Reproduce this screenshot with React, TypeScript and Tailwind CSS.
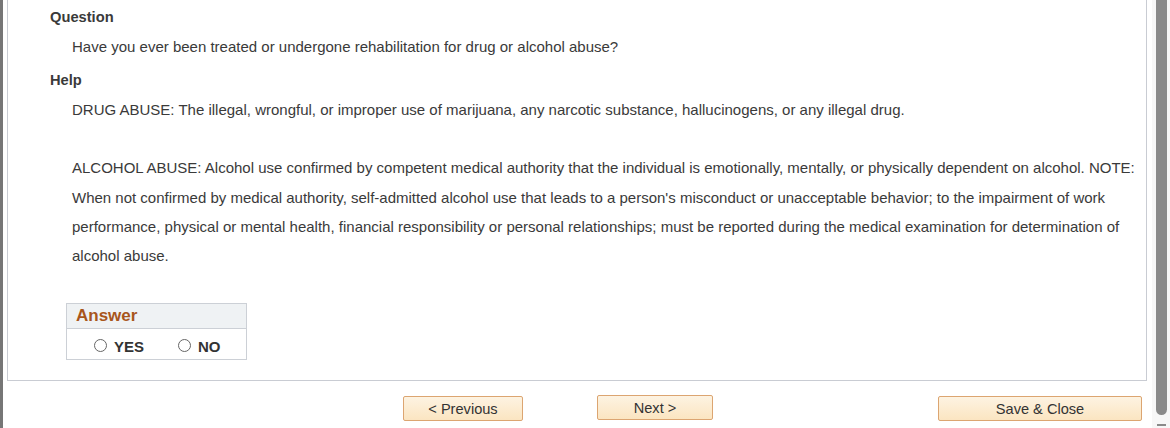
import React from "react";

function Radio({ label }: { label: string }) {
  return (
    <label className="flex items-center gap-[7px]">
      <span className="block w-[13px] h-[13px] rounded-full border border-[#666] bg-white -mt-[4px]" />
      <span className="font-bold text-[15px] text-[#333] leading-[20px]">{label}</span>
    </label>
  );
}

function Btn({ children, className }: { children: React.ReactNode; className: string }) {
  return (
    <button
      className={
        "h-[25px] rounded-[2px] border border-[#dca571] bg-gradient-to-b from-[#fdf3e2] to-[#fbe5c1] text-[14.6px] text-[#333] leading-[20px] " +
        className
      }
    >
      {children}
    </button>
  );
}

export default function App() {
  return (
    <div
      className="w-[1170px] h-[428px] flex bg-white overflow-hidden"
      style={{ fontFamily: '"Liberation Sans", Arial, sans-serif' }}
    >
      <div className="w-[3px] h-full bg-[#767676]" />
      <div className="flex-1 flex flex-col">
        <div className="ml-[4px] w-[1140px] h-[381px] border-l border-r border-b border-[#c9ccd3] pl-[42px] pt-[3px] text-[#3a3a3a]">
          <div className="font-bold text-[14.7px] leading-[29px]">Question</div>
          <div className="pl-[22px] text-[15px] leading-[29px]">
            Have you ever been treated or undergone rehabilitation for drug or alcohol abuse?
          </div>
          <div className="mt-[5px] font-bold text-[14.7px] leading-[29px]">Help</div>
          <div className="pl-[22px] pr-[6px] text-[15px] leading-[29.2px]">
            DRUG ABUSE: The illegal, wrongful, or improper use of marijuana, any narcotic substance, hallucinogens, or any illegal drug.
            <br />
            <br />
            ALCOHOL ABUSE: Alcohol use confirmed by competent medical authority that the individual is emotionally, mentally, or physically dependent on alcohol. NOTE: When not confirmed by medical authority, self-admitted alcohol use that leads to a person's misconduct or unacceptable behavior; to the impairment of work performance, physical or mental health, financial responsibility or personal relationships; must be reported during the medical examination for determination of alcohol abuse.
          </div>
          <div className="mt-[33px] ml-[16px] w-[181px] border border-[#ccd0d6]">
            <div className="h-[25px] bg-[#eff2f4] border-b border-[#ccd0d6] pl-[9px] font-bold text-[17px] leading-[24px] text-[#a8561c]">
              Answer
            </div>
            <div className="h-[30px] flex items-center pl-[27px] pt-[6px] gap-[34px]">
              <Radio label="YES" />
              <Radio label="NO" />
            </div>
          </div>
        </div>
        <div className="flex items-start mt-[15px] pl-[400px]">
          <Btn className="w-[120px]">&lt; Previous</Btn>
          <Btn className="w-[116px] ml-[74px] -mt-[1px]">Next &gt;</Btn>
          <Btn className="w-[204px] ml-[225px]">Save &amp; Close</Btn>
        </div>
      </div>
      <div className="w-[18px] h-full bg-[#f7f7f7] flex flex-col items-center pl-[4px] pr-[3px]">
        <div className="w-[11px] h-[415px] bg-[#8a8a8a] rounded-b-[6px]" />
        <svg width="11" height="13" viewBox="0 0 11 13" className="block">
          <path d="M1 10 L10 10" stroke="#8a8a8a" strokeWidth="2" />
        </svg>
      </div>
    </div>
  );
}
